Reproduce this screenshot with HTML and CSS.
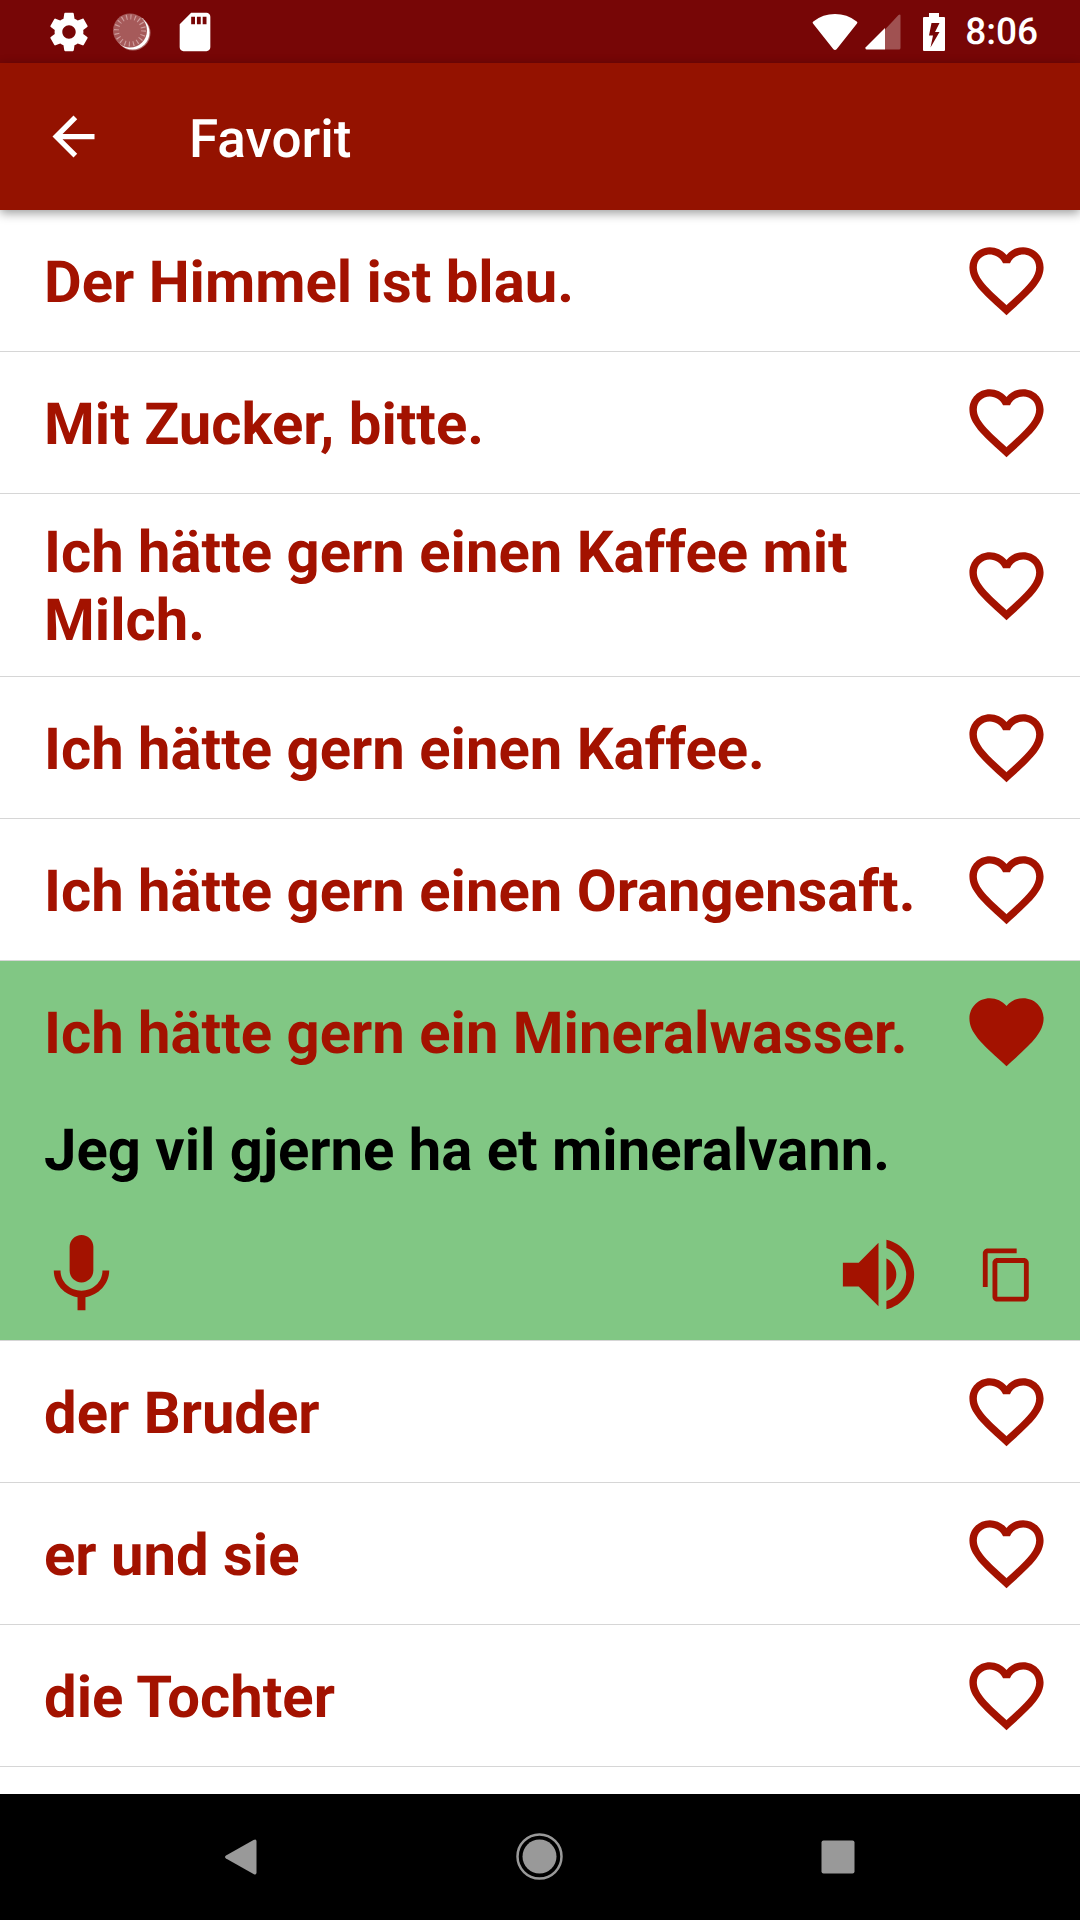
FILE: index.html
```html
<!DOCTYPE html>
<html lang="de">
<head>
<meta charset="utf-8">
<meta name="viewport" content="width=device-width, initial-scale=1">
<title>Favorit</title>
<link rel="stylesheet" href="styles.css">
</head>
<body>
<svg class="sprite" aria-hidden="true">
  <symbol id="heart-outline" viewBox="0 0 24 24"><path d="M16.5 3c-1.74 0-3.41.81-4.5 2.09C10.91 3.81 9.24 3 7.5 3 4.42 3 2 5.42 2 8.5c0 3.78 3.4 6.86 8.55 11.54L12 21.35l1.45-1.32C18.6 15.36 22 12.28 22 8.5 22 5.42 19.58 3 16.5 3zm-4.4 15.55l-.1.1-.1-.1C7.14 14.24 4 11.39 4 8.5 4 6.5 5.5 5 7.5 5c1.54 0 3.04.99 3.57 2.36h1.87C13.46 5.99 14.96 5 16.5 5c2 0 3.5 1.5 3.5 3.5 0 2.89-3.14 5.74-7.9 10.05z"/></symbol>
  <symbol id="heart-filled" viewBox="0 0 24 24"><path d="M12 21.35l-1.45-1.32C5.4 15.36 2 12.28 2 8.5 2 5.42 4.42 3 7.5 3c1.74 0 3.41.81 4.5 2.09C13.09 3.81 14.76 3 16.5 3 19.58 3 22 5.42 22 8.5c0 3.78-3.4 6.86-8.55 11.54L12 21.35z"/></symbol>
</svg>
<div class="screen">
  <div class="status-bar">
    <div class="status-notifications">
      <svg class="status-icon" viewBox="0 0 24 24"><path d="M19.43 12.98c.04-.32.07-.64.07-.98s-.03-.66-.07-.98l2.11-1.65c.19-.15.24-.42.12-.64l-2-3.46c-.12-.22-.39-.3-.61-.22l-2.49 1c-.52-.4-1.08-.73-1.69-.98l-.38-2.65C14.46 2.18 14.25 2 14 2h-4c-.25 0-.46.18-.49.42l-.38 2.65c-.61.25-1.17.59-1.69.98l-2.49-1c-.23-.09-.49 0-.61.22l-2 3.46c-.13.22-.07.49.12.64l2.11 1.65c-.04.32-.07.65-.07.98s.03.66.07.98l-2.11 1.65c-.19.15-.24.42-.12.64l2 3.46c.12.22.39.3.61.22l2.49-1c.52.4 1.08.73 1.69.98l.38 2.65c.03.24.24.42.49.42h4c.25 0 .46-.18.49-.42l.38-2.65c.61-.25 1.17-.59 1.69-.98l2.49 1c.23.09.49 0 .61-.22l2-3.46c.12-.22.07-.49-.12-.64l-2.11-1.65zM12 15.5c-1.93 0-3.5-1.57-3.5-3.5s1.57-3.5 3.5-3.5 3.5 1.57 3.5 3.5-1.57 3.5-3.5 3.5z"/></svg>
      <svg class="status-icon" viewBox="0 0 46 46">
        <circle cx="24" cy="24" r="17.5" fill-opacity=".4"/>
        <circle cx="23.5" cy="23.5" r="17"/>
        <circle cx="21" cy="21.5" r="17" fill="#a65a5a"/>
        <circle cx="21" cy="21.5" r="13.5" fill="none" stroke="#cf9d9d" stroke-width="5" stroke-dasharray="1.1 3.14"/>
      </svg>
      <svg class="status-icon" viewBox="0 0 24 24"><path d="M18 2h-8L4.02 8 4 20c0 1.1.9 2 2 2h12c1.1 0 2-.9 2-2V4c0-1.1-.9-2-2-2zm-6 6h-2V4h2v4zm3 0h-2V4h2v4zm3 0h-2V4h2v4z"/></svg>
    </div>
    <div class="status-system">
      <svg class="wifi-icon" viewBox="0 0 46 38"><path d="M23 37q-1 0-1.800-1L1 10.500Q0 9.300 1.300 8.400 11 1 23 1t21.700 7.400Q46 9.300 45 10.500L24.800 36q-.8 1-1.800 1z"/></svg>
      <svg class="signal-icon" viewBox="0 0 36 36"><path fill-opacity=".3" d="M20 15.500 33.500 1Q35.500-.3 35.500 1.500V34q0 1.500-1.500 1.500H20z"/><path d="M20 14v21.500H1.500Q0 35.500.5 33.500z"/></svg>
      <svg class="battery-icon" viewBox="0 0 22 38"><path fill-rule="evenodd" d="M6 0h10v4h5q1 0 1 1v32q0 1-1 1H1q-1 0-1-1V5q0-1 1-1h5zM8.500 10 6 22.500h4L7.500 34.500 16.500 19h-4.500L16.500 10z"/></svg>
      <time class="clock">8:06</time>
    </div>
  </div>
  <header class="app-bar">
    <button class="icon-button back-button" aria-label="Back"><svg class="back-icon" viewBox="0 0 24 24"><path d="M20 11H7.83l5.59-5.59L12 4l-8 8 8 8 1.41-1.41L7.83 13H20v-2z"/></svg></button>
    <h1 class="title">Favorit</h1>
  </header>
  <main class="content">
    <ul class="phrases">
      <li class="phrase"><div class="phrase-row"><p class="phrase-text">Der Himmel ist blau.</p><button class="icon-button" aria-label="Favorit"><svg class="heart"><use href="#heart-outline"/></svg></button></div></li>
      <li class="phrase"><div class="phrase-row"><p class="phrase-text">Mit Zucker, bitte.</p><button class="icon-button" aria-label="Favorit"><svg class="heart"><use href="#heart-outline"/></svg></button></div></li>
      <li class="phrase"><div class="phrase-row"><p class="phrase-text">Ich hätte gern einen Kaffee mit Milch.</p><button class="icon-button" aria-label="Favorit"><svg class="heart"><use href="#heart-outline"/></svg></button></div></li>
      <li class="phrase"><div class="phrase-row"><p class="phrase-text">Ich hätte gern einen Kaffee.</p><button class="icon-button" aria-label="Favorit"><svg class="heart"><use href="#heart-outline"/></svg></button></div></li>
      <li class="phrase"><div class="phrase-row"><p class="phrase-text">Ich hätte gern einen Orangensaft.</p><button class="icon-button" aria-label="Favorit"><svg class="heart"><use href="#heart-outline"/></svg></button></div></li>
      <li class="phrase phrase-open">
        <div class="phrase-row"><p class="phrase-text">Ich hätte gern ein Mineralwasser.</p><button class="icon-button" aria-label="Favorit"><svg class="heart"><use href="#heart-filled"/></svg></button></div>
        <p class="translation" lang="nb">Jeg vil gjerne ha et mineralvann.</p>
        <div class="actions">
          <button class="icon-button" aria-label="Record"><svg class="action-icon" viewBox="0 0 24 24"><path d="M12 14c1.66 0 2.99-1.34 2.99-3L15 5c0-1.66-1.34-3-3-3S9 3.34 9 5v6c0 1.66 1.34 3 3 3zm5.3-3c0 3-2.54 5.1-5.3 5.1S6.7 14 6.7 11H5c0 3.41 2.72 6.23 6 6.72V21h2v-3.28c3.28-.48 6-3.3 6-6.72h-1.7z"/></svg></button>
          <button class="icon-button speak-button" aria-label="Listen"><svg class="action-icon" viewBox="0 0 24 24"><path d="M3 9v6h4l5 5V4L7 9H3zm13.5 3c0-1.77-1.02-3.29-2.5-4.03v8.05c1.48-.73 2.5-2.25 2.5-4.02zM14 3.23v2.06c2.89.86 5 3.54 5 6.71s-2.11 5.85-5 6.71v2.06c4.01-.91 7-4.49 7-8.77s-2.99-7.86-7-8.77z"/></svg></button>
          <button class="icon-button" aria-label="Copy"><svg class="copy-icon" viewBox="0 0 24 24"><path d="M16 1H4c-1.1 0-2 .9-2 2v14h2V3h12V1zm3 4H8c-1.1 0-2 .9-2 2v14c0 1.1.9 2 2 2h11c1.1 0 2-.9 2-2V7c0-1.1-.9-2-2-2zm0 16H8V7h11v14z"/></svg></button>
        </div>
      </li>
      <li class="phrase"><div class="phrase-row"><p class="phrase-text">der Bruder</p><button class="icon-button" aria-label="Favorit"><svg class="heart"><use href="#heart-outline"/></svg></button></div></li>
      <li class="phrase"><div class="phrase-row"><p class="phrase-text">er und sie</p><button class="icon-button" aria-label="Favorit"><svg class="heart"><use href="#heart-outline"/></svg></button></div></li>
      <li class="phrase"><div class="phrase-row"><p class="phrase-text">die Tochter</p><button class="icon-button" aria-label="Favorit"><svg class="heart"><use href="#heart-outline"/></svg></button></div></li>
    </ul>
  </main>
  <nav class="nav-bar" aria-label="System">
    <button class="icon-button" aria-label="Back"><svg class="nav-icon" viewBox="0 0 48 48"><path d="M9 22.500 36.500 7q3-1.500 3 1.500v31q0 3-3 1.500L9 25.500q-2-1.500 0-3z"/></svg></button>
    <button class="icon-button" aria-label="Home"><svg class="nav-icon" viewBox="0 0 48 48"><circle cx="23.500" cy="23.500" r="17"/><circle cx="23.500" cy="23.500" r="22" fill="none" stroke="currentColor" stroke-width="2.500"/></svg></button>
    <button class="icon-button" aria-label="Overview"><svg class="nav-icon" viewBox="0 0 48 48"><rect x="6.500" y="7.500" width="33" height="33" rx="2"/></svg></button>
  </nav>
</div>
</body>
</html>
```

FILE: styles.css
```css
* { box-sizing: border-box; }

body {
  margin: 0;
  background: #fff;
  font-family: Roboto, sans-serif;
  text-rendering: geometricPrecision;
}

h1, p, ul { margin: 0; padding: 0; }
ul { list-style: none; }

svg { display: block; fill: currentColor; }
.sprite { position: absolute; width: 0; height: 0; }

.icon-button {
  flex: none;
  display: block;
  margin: 0;
  padding: 0;
  border: 0;
  background: none;
  color: inherit;
  cursor: pointer;
}

.screen {
  display: flex;
  flex-direction: column;
  height: 100vh;
}

/* Status bar */
.status-bar {
  flex: none;
  display: flex;
  align-items: center;
  justify-content: space-between;
  height: 63px;
  padding: 0 42px 0 46px;
  background: #770606;
  color: #fff;
}
.status-notifications { display: flex; gap: 17px; }
.status-system { display: flex; align-items: center; }
.status-icon { width: 46px; height: 46px; }
.wifi-icon { width: 46px; height: 38px; margin-right: 7px; }
.signal-icon { width: 36px; height: 36px; margin-right: 22px; }
.battery-icon { width: 22px; height: 38px; margin-right: 20px; }
.clock { padding-top: 3px; font-size: 37px; line-height: 44px; font-weight: 500; }

/* App bar */
.app-bar {
  flex: none;
  position: relative;
  display: flex;
  align-items: center;
  gap: 84px;
  height: 147px;
  padding: 0 42px;
  background: #941200;
  color: #fff;
  box-shadow: 0 3px 10px rgba(0, 0, 0, .4);
}
.back-icon { width: 63px; height: 63px; }
.title { padding-top: 4px; font-size: 53px; line-height: 62px; font-weight: 500; }

/* Phrase list */
.content { flex: 1; min-height: 0; overflow: hidden; }
.phrase { border-bottom: 1px solid #d6d6d6; color: #a31200; }
.phrase-open { background: #81c784; }
.phrase-row {
  display: flex;
  align-items: center;
  justify-content: space-between;
  min-height: 141px;
  padding: 21px 29px 21px 44px;
}
.phrase-text, .translation {
  font-size: 58px;
  line-height: 68px;
  font-weight: 700;
}
.phrase-text { padding-top: 4px; }
.heart { width: 89px; height: 89px; }
.translation { padding: 15px 29px 0 44px; color: #000; }
.actions {
  display: flex;
  align-items: center;
  padding: 42px 44px 18px 34px;
}
.action-icon { width: 95px; height: 95px; }
.copy-icon { width: 58px; height: 58px; }
.speak-button { margin: 0 52px 0 auto; }

/* Navigation bar */
.nav-bar {
  flex: none;
  display: flex;
  align-items: center;
  justify-content: center;
  gap: 251px;
  height: 126px;
  background: #000;
  color: #999;
}
.nav-icon { width: 48px; height: 48px; }
```
